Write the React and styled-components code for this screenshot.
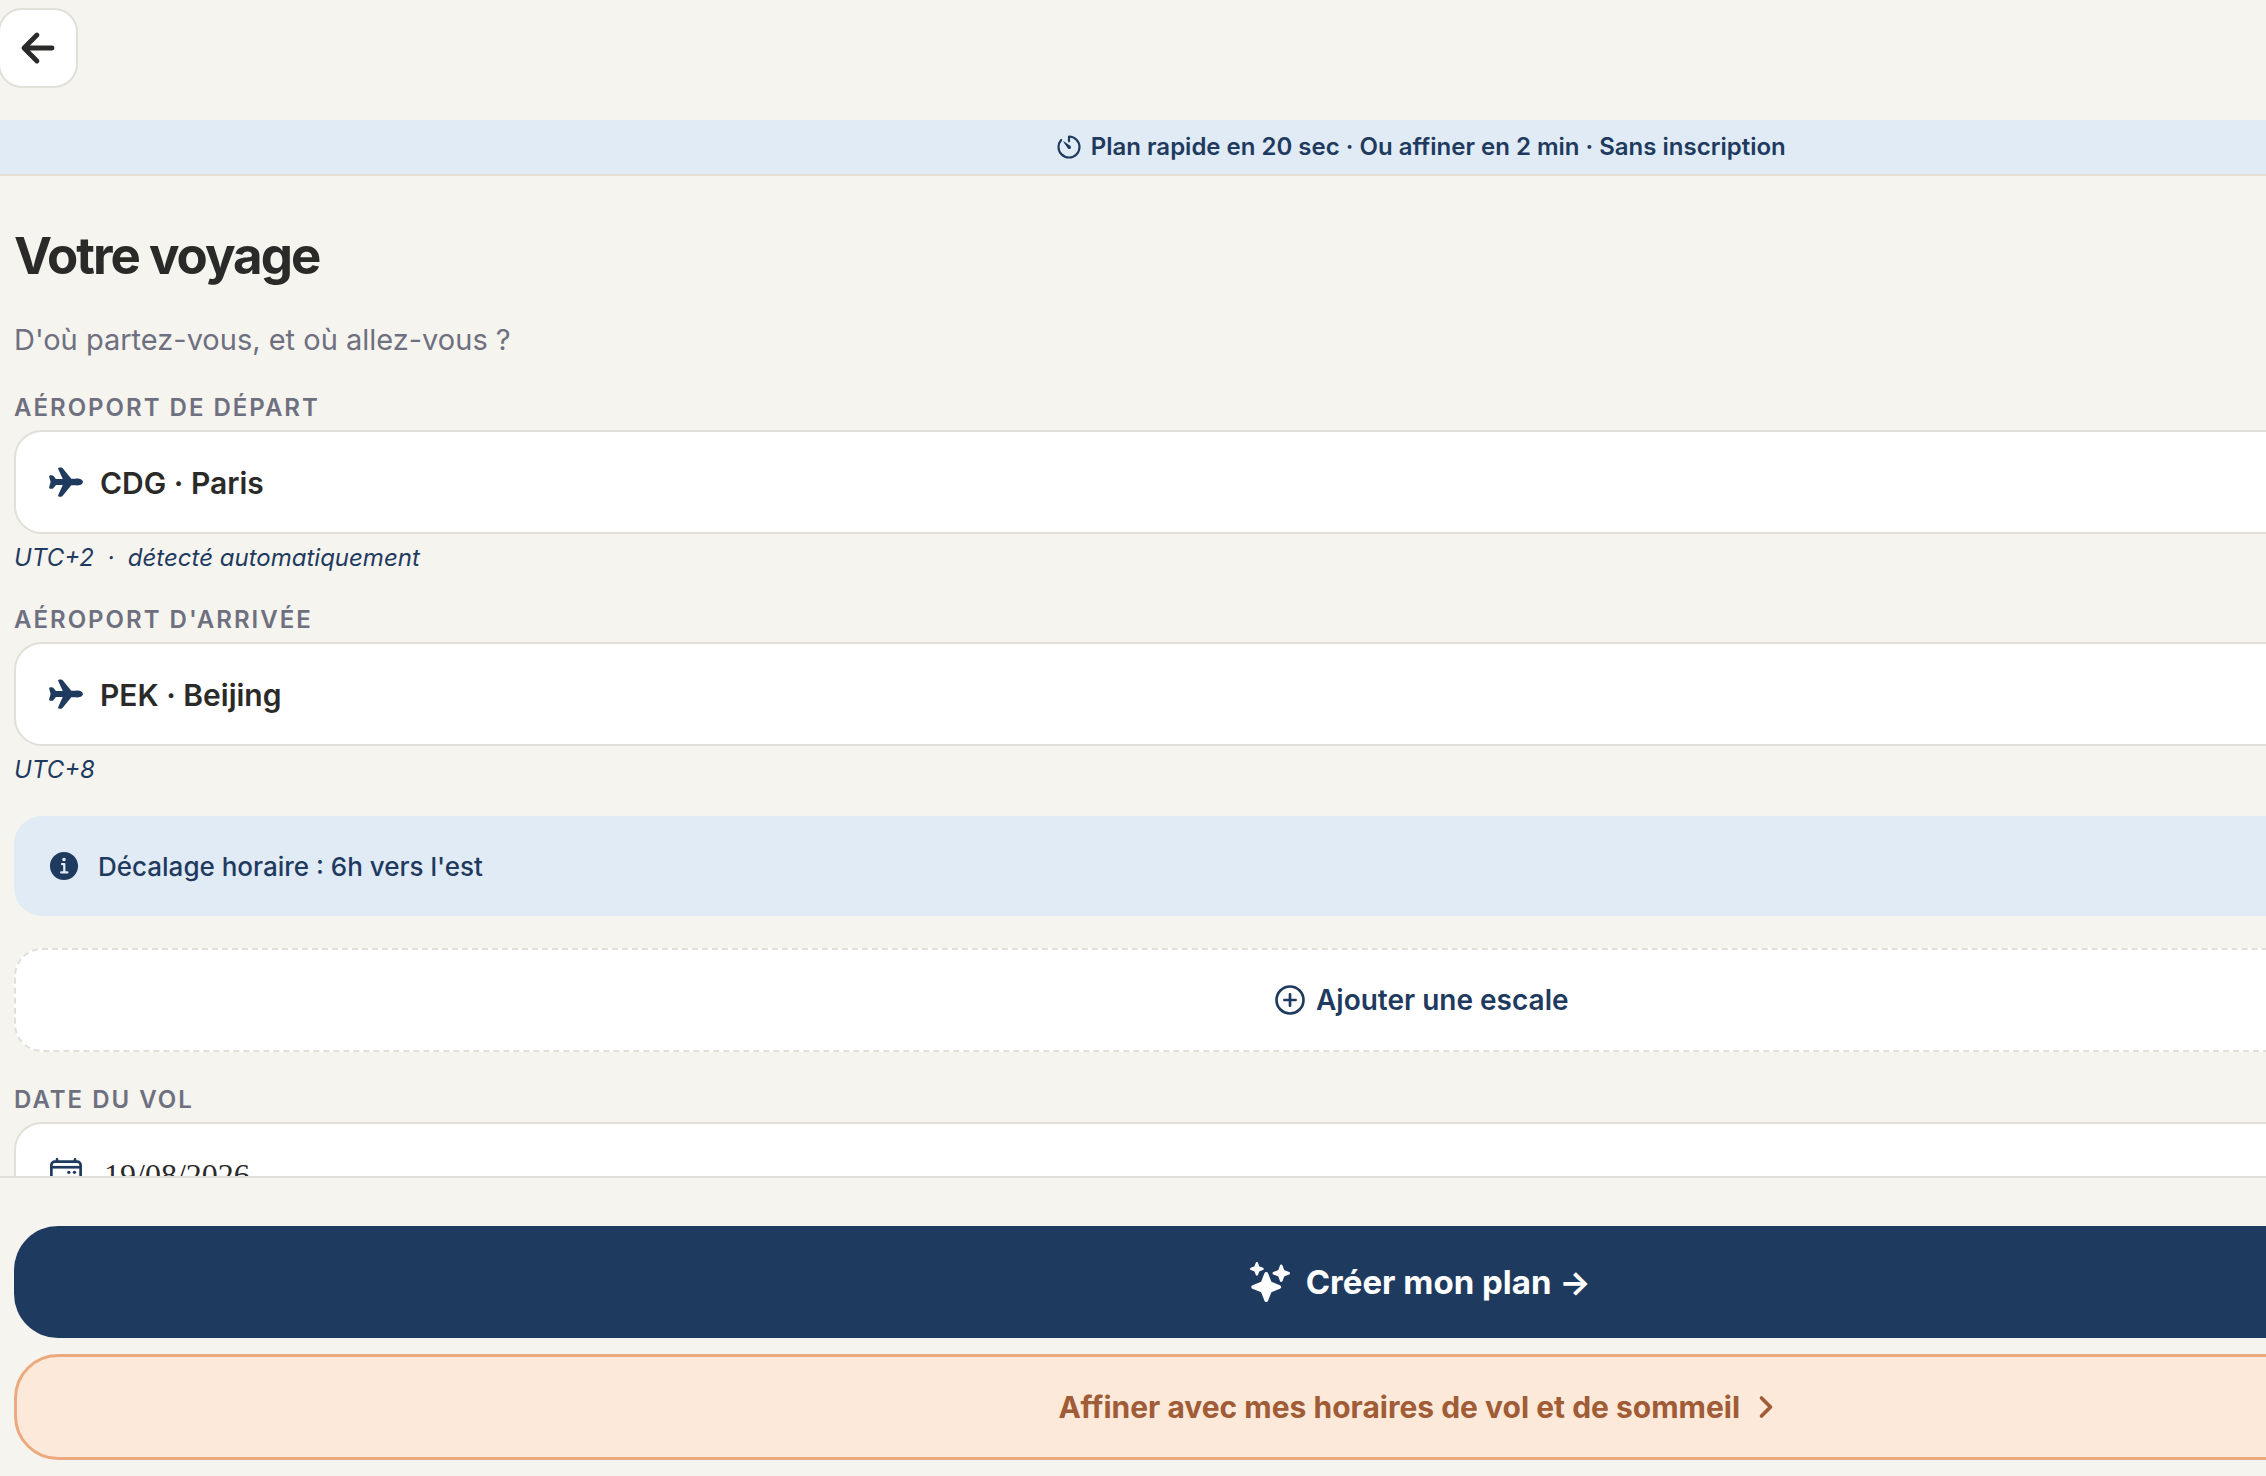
import React from "react";
import styled, { createGlobalStyle } from "styled-components";
import {
  IoAddCircleOutline,
  IoAirplane,
  IoArrowBack,
  IoCalendarOutline,
  IoChevronForward,
  IoInformationCircle,
  IoSparkles,
  IoTimerOutline,
} from "react-icons/io5";

const color = {
  page: "#f5f4ef",
  surface: "#ffffff",
  line: "#e0dfd8",
  ink: "#2a2a28",
  muted: "#6e7080",
  navy: "#1f3a5f",
  sky: "#e1ebf5",
  bannerLine: "#e8ddd2",
  peach: "#fce9d9",
  peachLine: "#eca97e",
  rust: "#a05c36",
};

const GlobalStyle = createGlobalStyle`
  *, *::before, *::after { box-sizing: border-box; }
  body {
    margin: 0;
    overflow: hidden;
    background: ${color.page};
    color: ${color.ink};
    font-family: Inter, "Liberation Sans", sans-serif;
  }
  button, input { font: inherit; color: inherit; }
  svg { flex: none; display: block; }
`;

/* The sheet is wider than the window and runs off its right edge. */
const Screen = styled.div`
  display: flex;
  flex-direction: column;
  width: calc(125vw + 8px);
  height: 100vh;
`;

const Header = styled.header`
  display: flex;
  padding: 8px 0 32px;
`;

const BackButton = styled.button`
  display: grid;
  place-items: center;
  width: 80px;
  height: 80px;
  margin-left: -2px;
  padding: 0;
  border: 2px solid ${color.line};
  border-radius: 24px;
  background: ${color.surface};

  svg * { stroke-width: 54px; }
`;

const Banner = styled.div`
  display: flex;
  align-items: center;
  justify-content: center;
  gap: 8px;
  height: 56px;
  border-bottom: 2px solid ${color.bannerLine};
  background: ${color.sky};
  color: ${color.navy};
  font-size: 24px;
  font-weight: 600;
  line-height: 32px;

  svg [stroke-width], svg [fill="none"] { stroke-width: 40px; }
`;

const Content = styled.main`
  flex: 1;
  min-height: 0;
  overflow: hidden;
  display: flex;
  flex-direction: column;
  gap: 32px;
  padding: 48px 14px 0;

  & > * { flex: none; }
`;

const Title = styled.h1`
  margin: 0;
  font-size: 51px;
  font-weight: 700;
  line-height: 64px;
  letter-spacing: -2px;
`;

const Subtitle = styled.p`
  margin: 0;
  color: ${color.muted};
  font-size: 29px;
  line-height: 40px;
`;

const FieldGroup = styled.div`
  display: flex;
  flex-direction: column;
  gap: 6px;
`;

const Label = styled.label`
  color: ${color.muted};
  font-size: 24px;
  font-weight: 600;
  line-height: 32px;
  letter-spacing: 2px;
  text-transform: uppercase;
`;

const InputBox = styled.div`
  display: flex;
  align-items: center;
  gap: 16px;
  height: 104px;
  padding: 0 32px;
  border: 2px solid ${color.line};
  border-radius: 28px;
  background: ${color.surface};

  svg { color: ${color.navy}; }
  svg [stroke-width], svg [fill="none"] { stroke-width: 38px; }
`;

const TextInput = styled.input`
  flex: 1;
  min-width: 0;
  padding: 2px 0 0;
  border: 0;
  outline: 0;
  background: transparent;
  font-size: 30px;
  font-weight: 600;
  line-height: 40px;
`;

const DateInput = styled(TextInput)`
  padding: 2px 4px 0;
  font-family: "Liberation Serif", serif;
  font-size: 32px;
  font-weight: 400;
`;

const Hint = styled.p`
  margin: 4px 0 0;
  color: ${color.navy};
  font-size: 24px;
  font-style: italic;
  line-height: 28px;
  white-space: pre;
`;

const Notice = styled.div`
  display: flex;
  align-items: center;
  gap: 16px;
  height: 100px;
  padding: 0 32px;
  border-radius: 28px;
  background: ${color.sky};
  color: ${color.navy};
  font-size: 26px;
  font-weight: 500;
`;

const AddButton = styled.button`
  display: flex;
  align-items: center;
  justify-content: center;
  gap: 8px;
  height: 104px;
  border: 2px dashed ${color.line};
  border-radius: 28px;
  background: ${color.surface};
  color: ${color.navy};
  font-size: 28px;
  font-weight: 600;

  svg [stroke-width], svg [fill="none"] { stroke-width: 38px; }
`;

const Footer = styled.footer`
  display: flex;
  flex-direction: column;
  gap: 16px;
  padding: 48px 14px 16px;
  border-top: 2px solid ${color.line};
`;

const ActionButton = styled.button`
  display: flex;
  align-items: center;
  justify-content: center;
  border-radius: 44px;
  font-weight: 700;
`;

const PrimaryButton = styled(ActionButton)`
  gap: 16px;
  height: 112px;
  border: 0;
  background: ${color.navy};
  color: ${color.surface};
  font-size: 33px;
`;

const SecondaryButton = styled(ActionButton)`
  gap: 10px;
  height: 106px;
  border: 3px solid ${color.peachLine};
  background: ${color.peach};
  color: ${color.rust};
  font-size: 30px;

  svg * { stroke-width: 58px; }
`;

function Field({ id, label, icon: Icon, hint, input: Input = TextInput, value }) {
  return (
    <FieldGroup>
      <Label htmlFor={id}>{label}</Label>
      <InputBox>
        <Icon size={36} aria-hidden="true" />
        <Input id={id} type="text" defaultValue={value} />
      </InputBox>
      {hint && <Hint>{hint}</Hint>}
    </FieldGroup>
  );
}

export default function App() {
  return (
    <>
      <GlobalStyle />
      <Screen>
        <Header>
          <BackButton type="button" aria-label="Retour">
            <IoArrowBack size={46} />
          </BackButton>
        </Header>
        <Banner>
          <IoTimerOutline size={28} />
          <span>Plan rapide en 20 sec · Ou affiner en 2 min · Sans inscription</span>
        </Banner>
        <Content>
          <Title>Votre voyage</Title>
          <Subtitle>D'où partez-vous, et où allez-vous ?</Subtitle>
          <Field
            id="departure"
            label="Aéroport de départ"
            icon={IoAirplane}
            value="CDG · Paris"
            hint="UTC+2  ·  détecté automatiquement"
          />
          <Field
            id="arrival"
            label="Aéroport d'arrivée"
            icon={IoAirplane}
            value="PEK · Beijing"
            hint="UTC+8"
          />
          <Notice>
            <IoInformationCircle size={36} />
            <span>Décalage horaire : 6h vers l'est</span>
          </Notice>
          <AddButton type="button">
            <IoAddCircleOutline size={36} />
            <span>Ajouter une escale</span>
          </AddButton>
          <Field
            id="flight-date"
            label="Date du vol"
            icon={IoCalendarOutline}
            input={DateInput}
            value="19/08/2026"
          />
        </Content>
        <Footer>
          <PrimaryButton type="button">
            <IoSparkles size={40} />
            <span>Créer mon plan →</span>
          </PrimaryButton>
          <SecondaryButton type="button">
            <span>Affiner avec mes horaires de vol et de sommeil</span>
            <IoChevronForward size={32} />
          </SecondaryButton>
        </Footer>
      </Screen>
    </>
  );
}
